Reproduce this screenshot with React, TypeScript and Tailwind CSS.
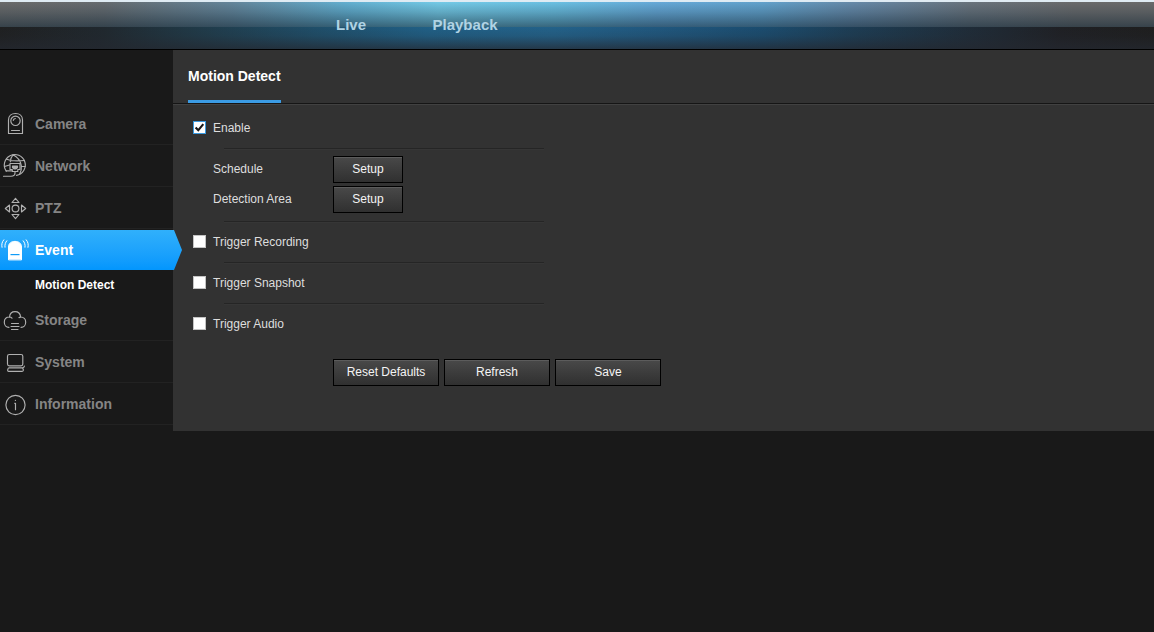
import React, { useState } from "react";

type NavItem = { label: string; icon: React.ReactNode; active?: boolean; sub?: string };

const svgProps = {
  width: 30,
  height: 27,
  viewBox: "0 0 30 27",
  fill: "none",
  stroke: "#b0b0b0",
  strokeWidth: 1.15,
  strokeLinecap: "round" as const,
  strokeLinejoin: "round" as const,
};

const CameraIcon = () => (
  <svg {...svgProps}>
    <path d="M8.5 23.5V10C8.5 6 11.5 3.5 15.5 3.5S22.5 6 22.5 10V23.5Z" />
    <circle cx="15.5" cy="10.8" r="4.7" />
    <path d="M13.3 10.4C13.5 9.3 14.2 8.7 15.3 8.5M11.5 20.5H19.5" />
  </svg>
);

const NetworkIcon = () => (
  <svg {...svgProps}>
    <path d="M6.3 19.2A10.5 10.5 0 1 1 16.5 23.4" />
    <path d="M6.5 7.2C11 9.2 18 9.2 24.5 8.5M13 2.8C11.5 4.5 10.5 7 10.3 9.8M13 2.8C17.5 5 20.5 9 21.3 13.5C21.8 16.5 21 19.5 19.5 22.5M4.5 14.5L9.5 13M21.5 14.5H25.2M6 18.8H11.5" />
    <path d="M10 11.5H20V17.5H17.8V19.5H12.3V17.5H10Z" />
    <path d="M12.5 14H17.5V15.5L15.8 17H14.2L12.5 15.5Z" fill="#b0b0b0" />
    <path d="M15 19.5V21C15 23.2 13.5 24.2 11 24.2H3.5" />
  </svg>
);

const PtzIcon = () => (
  <svg {...svgProps}>
    <circle cx="15.5" cy="14.5" r="3.4" />
    <path d="M12 8.5H19L15.5 4.3ZM12 20.5H19L15.5 24.7ZM9.5 11V18L5.3 14.5ZM21.5 11V18L25.7 14.5Z" />
  </svg>
);

const EventIcon = () => (
  <svg {...svgProps} stroke="#ffffff" strokeWidth={1}>
    <path d="M8.5 23.5V11C8.5 7.2 11.3 5.4 15 5.4S21.5 7.2 21.5 11V23.5Z" fill="#ffffff" />
    <path d="M10.5 18.6H19.5" stroke="#109cf8" strokeWidth={1.2} strokeLinecap="butt" />
    <path d="M3.8 3.8C1.9 6 1.4 8.5 2 11.3M6.8 4.8C5.3 6.6 4.7 8.6 5 11.2M23.2 4.8C24.7 6.6 25.3 8.6 25 11.2M26.2 3.8C28.1 6 28.6 8.5 28 11.3" />
  </svg>
);

const StorageIcon = () => (
  <svg {...svgProps}>
    <path d="M9 21.3C6 21.3 4.3 18.9 4.3 16.2C4.3 13.2 6.3 11 9.5 11C9.8 7.8 12 5.6 15 5.6C18.2 5.6 20.3 7.8 20.6 11C23.6 11 25.7 13.2 25.7 16.2C25.7 18.9 24 21.3 21 21.3" />
    <path d="M9.5 11C10.6 11 11.3 11.4 12 12.2M20.6 11L19 11.6M11.5 17.5H18.5M11 20.5H19M11.5 23.5H18" />
  </svg>
);

const SystemIcon = () => (
  <svg {...svgProps}>
    <rect x="7.5" y="6.5" width="15.3" height="11.3" rx="1.8" />
    <path d="M9 19.8H22.5C23.7 19.8 24.5 18.8 24.3 18M9 19.8C7.6 20.4 7 23.4 8.7 23.4H22C23.5 23.4 23.8 21.6 22.8 20.5" />
  </svg>
);

const InfoIcon = () => (
  <svg {...svgProps}>
    <circle cx="15.5" cy="15" r="9.6" />
    <path d="M14.6 13.2H15.5V19.7M15.4 10.2V10.4" />
  </svg>
);

const NAV: NavItem[] = [
  { label: "Camera", icon: <CameraIcon /> },
  { label: "Network", icon: <NetworkIcon /> },
  { label: "PTZ", icon: <PtzIcon /> },
  { label: "Event", icon: <EventIcon />, active: true, sub: "Motion Detect" },
  { label: "Storage", icon: <StorageIcon /> },
  { label: "System", icon: <SystemIcon /> },
  { label: "Information", icon: <InfoIcon /> },
];

function Header() {
  return (
    <header className="h-[50px] border-b border-black bg-[#dfebf3] pt-[2px]">
      <div className="h-[47px] bg-[linear-gradient(to_bottom,rgba(18,38,52,0)_0px,rgba(18,38,52,0.2)_10px,rgba(18,38,52,0.58)_25px,transparent_25px,rgba(36,40,48,0.15)_34px,rgba(36,40,48,0.72)_47px),linear-gradient(to_right,#6a6a6a_0%,#666b6f_9%,#64859a_20%,#63afd0_30%,#74cae6_38%,#6bc0e2_48%,#66a9d8_57%,#62a2cc_66%,#6689a8_74%,#69737c_84%,#6a6a6b_93%,#6a6a6a_100%),linear-gradient(to_right,#1f2021_0%,#20282e_9%,#203c4b_18%,#1f506c_28%,#206086_37%,#23628a_48%,#20587f_57%,#1b4d70_66%,#1d3d54_74%,#1f2c38_84%,#1f2024_92%,#1e1e1e_100%)] bg-[length:100%_47px,100%_25px,100%_47px] bg-no-repeat">
        <nav className="flex gap-[66.5px] pt-[12px] pl-[336px] text-[15px] leading-[22px] font-bold text-[#b0d3e4]">
          <a>Live</a>
          <a>Playback</a>
        </nav>
      </div>
    </header>
  );
}

function Sidebar() {
  return (
    <aside className="w-[173px] shrink-0 bg-[#191919] pt-[53px]">
      {NAV.map((item) =>
        item.active ? (
          <div key={item.label}>
            <div className="mt-[1px] flex h-10 w-[182px] items-center bg-linear-to-b from-[#30b0fb] to-[#0296fd] pb-px text-sm font-bold text-white [clip-path:polygon(0_0,174px_0,100%_50%,174px_100%,0_100%)]">
              {item.icon}
              <span className="ml-[5px] pt-px">{item.label}</span>
            </div>
            <div className="h-[29px] pl-[35px] text-xs leading-[30px] font-bold text-white">{item.sub}</div>
          </div>
        ) : (
          <div
            key={item.label}
            className="flex h-[42px] items-center border-b border-[#222222] text-sm font-bold text-[#858585]"
          >
            {item.icon}
            <span className="ml-[5px]">{item.label}</span>
          </div>
        ),
      )}
    </aside>
  );
}

function Check({ label, initial = false }: { label: string; initial?: boolean }) {
  const [on, setOn] = useState(initial);
  return (
    <button className="flex h-[14px] items-center gap-[7px] pl-[20px]" onClick={() => setOn(!on)}>
      <span className={on ? "size-[13px] border border-[#3a9ae0] bg-white" : "size-[13px] border border-[#c4c4c4] bg-white"}>
        {on && (
          <svg width="11" height="11" viewBox="0 0 11 11" fill="none">
            <path d="M1.6 5.4L4.3 8.2L9.3 2.2" stroke="#161616" strokeWidth="2.1" />
          </svg>
        )}
      </span>
      <span className="mt-[2px] leading-4">{label}</span>
    </button>
  );
}

function Btn({ children, wide = false }: { children: React.ReactNode; wide?: boolean }) {
  return (
    <button
      className={`${wide ? "w-[106px]" : "w-[70px]"} h-[27px] border border-black bg-linear-to-b from-[#494949] to-[#303030] pb-px text-xs text-[#f4f4f4] shadow-[inset_0_1px_0_#5c5c5c]`}
    >
      {children}
    </button>
  );
}

const Divider = () => (
  <div className="ml-[51px] h-[2px] w-[320px] border-t border-b border-t-[#252525] border-b-[#363636]" />
);

export default function App() {
  return (
    <div className="h-[632px] w-[1154px] overflow-hidden bg-[#191919] font-['Liberation_Sans',Arial,sans-serif]">
      <Header />
      <div className="flex h-[381px]">
        <Sidebar />
        <main className="flex-1 bg-[#323232] text-xs text-[#dedede]">
          <div className="flex h-[55px] border-b border-[#414141] pl-[15px] shadow-[inset_0_-1px_0_#151515]">
            <h1 className="h-[53px] border-b-[3px] border-[#3b9be4] pt-[16px] text-sm leading-5 font-bold text-white">
              Motion Detect
            </h1>
          </div>
          <div className="flex h-[43px] items-center pt-px">
            <Check label="Enable" initial />
          </div>
          <Divider />
          <div className="flex h-[71px] flex-col gap-[3px] pt-[6px] pl-[40px]">
            <div className="flex">
              <span className="w-[120px] leading-[26px]">Schedule</span>
              <Btn>Setup</Btn>
            </div>
            <div className="flex">
              <span className="w-[120px] leading-[26px]">Detection Area</span>
              <Btn>Setup</Btn>
            </div>
          </div>
          <Divider />
          <div className="flex h-[39px] items-center pb-[3px]">
            <Check label="Trigger Recording" />
          </div>
          <Divider />
          <div className="flex h-[39px] items-center pb-[3px]">
            <Check label="Trigger Snapshot" />
          </div>
          <Divider />
          <div className="flex h-[39px] items-center pb-[3px]">
            <Check label="Trigger Audio" />
          </div>
          <div className="flex gap-[5px] pt-[15px] pl-[160px]">
            <Btn wide>Reset Defaults</Btn>
            <Btn wide>Refresh</Btn>
            <Btn wide>Save</Btn>
          </div>
        </main>
      </div>
    </div>
  );
}
